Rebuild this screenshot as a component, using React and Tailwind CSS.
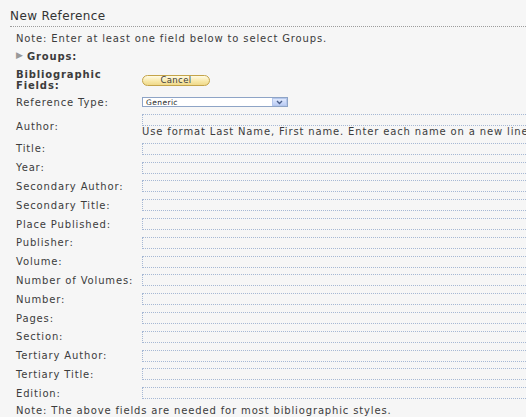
import React from 'react';

const fields = [
  'Title',
  'Year',
  'Secondary Author',
  'Secondary Title',
  'Place Published',
  'Publisher',
  'Volume',
  'Number of Volumes',
  'Number',
  'Pages',
  'Section',
  'Tertiary Author',
  'Tertiary Title',
  'Edition',
];

function TextBox() {
  return <div className="h-[12px] w-[420px] shrink-0 border border-dotted border-[#a6b8d4]" />;
}

function FieldRow({ label }) {
  return (
    <div className="flex h-[18.8px] items-center">
      <div className="w-[126px] shrink-0">{label}:</div>
      <TextBox />
    </div>
  );
}

function CancelButton() {
  return (
    <button
      type="button"
      className="flex h-[11px] w-[68px] items-center justify-center rounded-full border border-[#c4a449] bg-[linear-gradient(#fffbe4,#f7e7a6_60%,#efd98a)] text-[8.5px] leading-none tracking-[0.4px] text-[#3c3c3c]"
    >
      Cancel
    </button>
  );
}

function TypeSelect() {
  return (
    <div className="flex h-[10px] w-[146px] items-center border border-[#8ea4c6] bg-white">
      <span className="flex-1 pl-[3px] text-[7.5px] leading-none tracking-[0.4px] text-[#222]">Generic</span>
      <span className="flex h-[8px] w-[15px] items-center justify-center border border-[#b5c7ec] bg-[linear-gradient(#dfe8fc,#bccdf5)]">
        <svg width="7" height="5" viewBox="0 0 7 5">
          <path d="M1 1 L3.5 3.5 L6 1" fill="none" stroke="#4a5f8a" strokeWidth="1.4" />
        </svg>
      </span>
    </div>
  );
}

export default function App() {
  return (
    <div className="h-[417px] w-[526px] overflow-hidden bg-[#f6f6f6] font-['DejaVu_Sans',sans-serif] text-[10px] tracking-[0.85px] text-[#3c3c3c]">
      <div className="ml-[10px] flex h-[27px] items-center border-b border-dotted border-[#9c9c9c] pt-[6px]">
        <h1 className="text-[12px] font-normal tracking-[0.4px] text-[#333]">New Reference</h1>
      </div>

      <div className="pl-[16px]">
        <div className="flex h-[23px] items-center">Note: Enter at least one field below to select Groups.</div>

        <div className="flex h-[12px] items-center font-bold">
          <span className="mr-[4px] text-[9px] tracking-normal text-[#999]">▶</span>
          Groups:
        </div>

        <div className="mt-[7px] flex h-[22px] items-center">
          <div className="w-[126px] shrink-0 font-bold leading-[11px]">
            Bibliographic
            <br />
            Fields:
          </div>
          <CancelButton />
        </div>

        <div className="flex h-[22.5px] items-center">
          <div className="w-[126px] shrink-0">Reference Type:</div>
          <TypeSelect />
        </div>

        <div className="flex h-[26px] items-center">
          <div className="w-[126px] shrink-0">Author:</div>
          <div className="flex h-full flex-col">
            <TextBox />
            <div className="whitespace-nowrap leading-[12px]">
              Use format Last Name, First name. Enter each name on a new line.
            </div>
          </div>
        </div>

        {fields.map((f) => (
          <FieldRow key={f} label={f} />
        ))}

        <div className="flex h-[16px] items-center whitespace-nowrap">
          Note: The above fields are needed for most bibliographic styles.
        </div>
      </div>
    </div>
  );
}
